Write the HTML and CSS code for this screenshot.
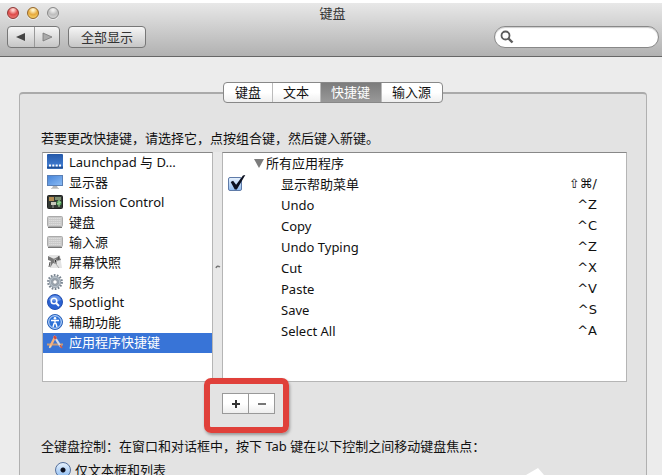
FILE: index.html
```html
<!DOCTYPE html>
<html lang="zh-CN">
<head>
    <meta charset="UTF-8">
    <meta name="viewport" content="width=device-width, initial-scale=1.0">
    <title>键盘</title>
    <link rel="stylesheet" href="styles.css">
</head>
<body>
    <div class="window">
        <header class="titlebar">
            <div class="title-row">
                <div class="lights">
                    <button class="light red" aria-label="关闭"></button>
                    <button class="light yellow" aria-label="最小化"></button>
                    <button class="light gray" aria-label="缩放"></button>
                </div>
                <h1>键盘</h1>
            </div>
            <div class="toolbar">
                <div class="nav">
                    <button aria-label="后退"><svg width="10" height="10" viewBox="0 0 10 10"><path d="M0 5L9 1V9Z" fill="#444"/></svg></button>
                    <button aria-label="前进"><svg width="10" height="10" viewBox="0 0 10 10"><path d="M1 1L10 5L1 9Z" fill="#aaa" stroke="#777" stroke-width=".8"/></svg></button>
                </div>
                <button class="show-all">全部显示</button>
                <label class="search">
                    <svg width="14" height="14" viewBox="0 0 14 14" fill="none" stroke="#5c5c5c"><circle cx="5.5" cy="5.5" r="4" stroke-width="1.8"/><path d="M8.5 8.5L12.5 12.5" stroke-width="2.4"/></svg>
                    <input type="text" aria-label="搜索">
                </label>
            </div>
        </header>

        <main class="content">
            <nav class="tabs">
                <button>键盘</button>
                <button>文本</button>
                <button class="active">快捷键</button>
                <button>输入源</button>
            </nav>

            <section class="pane">
                <p class="hint">若要更改快捷键，请选择它，点按组合键，然后键入新键。</p>

                <div class="lists">
                    <ul class="categories">
                        <li>
                            <svg viewBox="0 0 16 16"><defs><linearGradient id="blue" x2="0" y2="1"><stop stop-color="#2458a8"/><stop offset="1" stop-color="#4684da"/></linearGradient></defs><rect width="16" height="15" rx="1" fill="url(#blue)"/><path d="M0 13.5H16" stroke="#234f91" stroke-width="2"/><path d="M2 11.5h2M5.300 11.500h2M8.700 11.500h2M12 11.500h2" stroke="#fff" stroke-width="2"/></svg>
                            <span>Launchpad 与 D…</span>
                        </li>
                        <li>
                            <svg viewBox="0 0 16 16"><defs><linearGradient id="screen" x2="1" y2="1"><stop stop-color="#4583d8"/><stop offset="1" stop-color="#8dbdf5"/></linearGradient></defs><rect x=".5" y="1.500" width="15" height="10" fill="url(#screen)" stroke="#5a7fb4"/><path d="M6 12h4l1 2H5z" fill="#b5b5b5"/><path d="M4 14.500h8" stroke="#ccc"/></svg>
                            <span>显示器</span>
                        </li>
                        <li>
                            <svg viewBox="0 0 16 16"><rect x=".5" y="1.500" width="15" height="13" rx="1" fill="#343a35" stroke="#222"/><path d="M2 3h5v4H2z" fill="#b18b52"/><path d="M8 3h6v3H8z" fill="#7d8f72"/><path d="M4 8h5v3H4z" fill="#c9c9bd"/><path d="M6 11v3" stroke="#999"/><circle cx="12" cy="9" r="2.500" fill="#4fa057"/><path d="M12 6v7M10 10l4-2" stroke="#a7d6a3"/></svg>
                            <span>Mission Control</span>
                        </li>
                        <li>
                            <svg viewBox="0 0 16 16"><rect x=".5" y="2.500" width="15" height="10" rx="1" fill="#c9c9c9" stroke="#aaa"/><path d="M2 4.500h12M2 6.500h12M2 8.500h12M2 10.500h12" stroke="#dcdcdc" stroke-dasharray="1.500 .5"/><path d="M1 13.500h14" stroke="#777"/></svg>
                            <span>键盘</span>
                        </li>
                        <li>
                            <svg viewBox="0 0 16 16"><rect x=".5" y="2.500" width="15" height="10" rx="1" fill="#c9c9c9" stroke="#aaa"/><path d="M2 4.500h12M2 6.500h12M2 8.500h12M2 10.500h12" stroke="#dcdcdc" stroke-dasharray="1.500 .5"/><path d="M1 13.500h14" stroke="#777"/></svg>
                            <span>输入源</span>
                        </li>
                        <li>
                            <svg viewBox="0 0 16 16"><path d="M2 1h11l2 13H4z" fill="#e4e4e4"/><path d="M1 2l6 3 5-3 2 4-5 1 1 3-4-1-3 5 1-7-3-1z" fill="#777"/><path d="M7 4l3 3-2 3zM9 10l3 4" fill="#333" stroke="#aaa"/><path d="M3 8l-1 5M12 2l-1 4" stroke="#555"/></svg>
                            <span>屏幕快照</span>
                        </li>
                        <li>
                            <svg viewBox="0 0 16 16"><circle cx="8" cy="8" r="6.800" fill="none" stroke="#78838f" stroke-width="2.200" stroke-dasharray="1.700 1.360"/><circle cx="8" cy="8" r="4.300" fill="none" stroke="#96a1ac" stroke-width="3.600"/><circle cx="8" cy="8" r="4.700" fill="none" stroke="#bcc5cd"/><circle cx="8" cy="8" r="2.300" fill="#fff" stroke="#6b7580" stroke-width=".8"/></svg>
                            <span>服务</span>
                        </li>
                        <li>
                            <svg viewBox="0 0 16 16"><circle cx="8" cy="8" r="7.500" fill="#2b62d2" stroke="#2450b0"/><path d="M2 6a6.300 6.300 0 0 1 12 0Q8 9 2 6z" fill="#6694e8"/><circle cx="7" cy="7" r="2.800" fill="none" stroke="#fff" stroke-width="1.500"/><path d="M9 9l3 3" stroke="#fff" stroke-width="2"/></svg>
                            <span>Spotlight</span>
                        </li>
                        <li>
                            <svg viewBox="0 0 16 16"><circle cx="8" cy="8" r="7.500" fill="#2d72d8" stroke="#2f65b8"/><circle cx="8" cy="8" r="6.300" fill="none" stroke="#d3e5ff"/><circle cx="8" cy="4.300" r="1.300" fill="#fff"/><path d="M4 6.500h8M8 6v4M7.200 9L6 13M8.800 9L10 13" stroke="#fff" stroke-width="1.400"/></svg>
                            <span>辅助功能</span>
                        </li>
                        <li class="selected">
                            <svg viewBox="0 0 16 16" fill="none"><path d="M0 10.500h16" stroke="#c79a78" stroke-width="2"/><path d="M8.500 2L3 13" stroke="#f3b07c" stroke-width="2.400"/><path d="M7 2l7 11" stroke="#d5dae4" stroke-width="2.200"/><path d="M7 2l2 3" stroke="#d3493f" stroke-width="2.400"/><path d="M3.800 11.500L2.500 14" stroke="#f1d9b0" stroke-width="1.500"/><path d="M13 11l2 3" stroke="#d35b45" stroke-width="1.500"/></svg>
                            <span>应用程序快捷键</span>
                        </li>
                    </ul>

                    <div class="splitter"><svg width="6" height="6" viewBox="0 0 6 6"><path d="M1 4Q2 1 5 3" fill="none" stroke="#777" stroke-width="1.500"/></svg></div>

                    <div class="shortcuts">
                        <table>
                            <thead>
                                <tr><th colspan="3"><svg width="10" height="9" viewBox="0 0 10 9"><path d="M0 0H10L5 9Z" fill="#7c7c7c"/></svg>所有应用程序</th></tr>
                            </thead>
                            <tbody>
                                <tr><td class="check"><input type="checkbox" id="help-menu" checked></td><td><label for="help-menu">显示帮助菜单</label></td><td class="key">⇧⌘/</td></tr>
                                <tr><td></td><td>Undo</td><td class="key">^Z</td></tr>
                                <tr><td></td><td>Copy</td><td class="key">^C</td></tr>
                                <tr><td></td><td>Undo Typing</td><td class="key">^Z</td></tr>
                                <tr><td></td><td>Cut</td><td class="key">^X</td></tr>
                                <tr><td></td><td>Paste</td><td class="key">^V</td></tr>
                                <tr><td></td><td>Save</td><td class="key">^S</td></tr>
                                <tr><td></td><td>Select All</td><td class="key">^A</td></tr>
                            </tbody>
                        </table>
                    </div>
                </div>

                <div class="edit-buttons">
                    <button aria-label="添加"><svg width="10" height="10" viewBox="0 0 10 10"><path d="M1 5H9M5 1V9" stroke="#333" stroke-width="2"/></svg></button>
                    <button aria-label="移除"><svg width="10" height="10" viewBox="0 0 10 10"><path d="M1 5H9" stroke="#777" stroke-width="2"/></svg></button>
                    <div class="highlight"></div>
                </div>

                <p class="access">全键盘控制：在窗口和对话框中，按下 Tab 键在以下控制之间移动键盘焦点：</p>
                <label class="radio"><input type="radio" name="access" checked>仅文本框和列表</label>
            </section>
        </main>
        <svg class="corner-mark" width="20" height="8" viewBox="0 0 20 8"><path d="M2 8L14 1L20 8Z" fill="#fff"/></svg>
    </div>
</body>
</html>
```
FILE: styles.css
```css
* {
    box-sizing: border-box;
}
body {
    margin: 0;
    font-family: "Noto Sans", "Noto Sans CJK SC", "DejaVu Sans", sans-serif;
    font-size: 13px;
    line-height: 20px;
    color: #111;
    background: #fff;
}
button, input {
    font: inherit;
    color: inherit;
    margin: 0;
    padding: 0;
}
p, h1, ul {
    margin: 0;
    padding: 0;
}
svg {
    display: block;
    flex: none;
}
.window {
    position: relative;
    display: flex;
    flex-direction: column;
    height: 100vh;
    padding-top: 3px;
    overflow: hidden;
}

/* title bar */
.titlebar {
    flex: none;
    padding-bottom: 8px;
    background: linear-gradient(#e8e8e8, #b1b1b1);
    border-bottom: 1px solid #666;
}
.title-row {
    display: grid;
    grid-template-columns: 1fr auto 1fr;
    align-items: center;
    height: 22px;
    padding: 0 4px 2px 7px;
}
.title-row h1 {
    font-size: 13px;
    font-weight: normal;
    color: #333;
}
.lights {
    display: flex;
    gap: 8px;
}
.light {
    width: 12px;
    height: 12px;
    border: 1px solid #888;
    border-radius: 50%;
    box-shadow: 0 1px 0 #eee;
}
.red {
    border-color: #8d3735;
    background: radial-gradient(circle at 50% 20%, #ffd0cc 10%, #de4a49 50%, #f58f88);
}
.yellow {
    border-color: #94662a;
    background: radial-gradient(circle at 50% 20%, #fff3c8 10%, #e6a93c 50%, #ffe47d);
}
.gray {
    background: radial-gradient(circle at 50% 20%, #eee 10%, #bdbdbd 50%, #e2e2e2);
}
.toolbar {
    display: flex;
    gap: 8px;
    padding: 1px 3px 0 7px;
}
.nav {
    display: flex;
    border: 1px solid #777;
    border-radius: 4px;
    background: linear-gradient(#f6f6f6, #c6c6c6);
}
.nav button {
    display: flex;
    align-items: center;
    justify-content: center;
    width: 26px;
    height: 20px;
    border: 0;
    background: none;
}
.nav button + button {
    width: 25px;
    border-left: 1px solid #999;
}
.show-all {
    width: 78px;
    height: 22px;
    line-height: 20px;
    border: 1px solid #777;
    border-radius: 4px;
    background: linear-gradient(#f6f6f6, #c6c6c6);
    color: #333;
}
.search {
    display: flex;
    align-items: center;
    width: 165px;
    height: 22px;
    margin-left: auto;
    padding: 0 8px 0 5px;
    border: 1px solid #888;
    border-radius: 11px;
    background: #fff;
    box-shadow: inset 0 1px 1px #ccc;
}
.search input {
    flex: 1;
    min-width: 0;
    border: 0;
    outline: 0;
    background: none;
}

/* content */
.content {
    display: flex;
    flex: 1;
    flex-direction: column;
    padding: 25px 15px 0 19px;
    background: #ececec;
}
.tabs {
    z-index: 1;
    display: flex;
    align-self: center;
    margin-bottom: -11px;
    border: 1px solid #888;
    border-radius: 4px;
    background: linear-gradient(#fff 50%, #efefef);
}
.tabs button {
    height: 19px;
    padding: 0 11px;
    line-height: 19px;
    border: 0;
    background: none;
}
.tabs button + button {
    padding-left: 10px;
    border-left: 1px solid #bbb;
}
.tabs .active {
    background: linear-gradient(#7c7c7c, #999);
    color: #fff;
}
.pane {
    flex: 1;
    padding: 34px 19px 0 21px;
    border: 1px solid #b0b0b0;
    border-top: 2px solid #aaa;
    border-bottom: 0;
    border-radius: 4px 4px 0 0;
    background: #e3e3e3;
}
.hint {
    margin-bottom: 4px;
}
.lists {
    display: flex;
    height: 230px;
    margin-left: 1px;
}
.categories {
    width: 171px;
    list-style: none;
    border: 1px solid #b5b5b5;
    border-top-color: #888;
    background: #fff;
}
.categories li {
    display: flex;
    align-items: center;
    gap: 6px;
    height: 20px;
    padding: 0 0 2px 4px;
    white-space: nowrap;
}
.categories svg {
    width: 16px;
    height: 16px;
}
.categories .selected {
    background: #3874d7;
    color: #fff;
}
.splitter {
    display: flex;
    align-items: center;
    justify-content: center;
    width: 9px;
    background: #e8e8e8;
}
.shortcuts {
    flex: 1;
    border: 1px solid #b5b5b5;
    border-top-color: #888;
    background: #fff;
}
table {
    width: 100%;
    border-collapse: collapse;
}
tr {
    height: 21px;
}
th, td {
    padding: 0 0 1px;
    line-height: 18px;
    font-weight: normal;
    text-align: left;
}
th {
    padding-left: 31px;
}
th svg {
    display: inline-block;
    margin-right: 2px;
}
.check, td:first-child {
    width: 58px;
    padding-left: 5px;
}
.check input {
    display: block;
    appearance: none;
    width: 14px;
    height: 14px;
    border: 1px solid #5f7ba8;
    border-radius: 2px;
    background: linear-gradient(#e5f0fc, #93bdf0);
}
.check input::before {
    content: "";
    display: block;
    width: 17px;
    height: 15px;
    margin-top: -3px;
    background: #0b1020;
    clip-path: polygon(10% 47%, 24% 38%, 42% 65%, 82% 4%, 96% 0, 46% 96%, 34% 96%);
}
.key {
    padding-right: 29px;
    font-family: "DejaVu Sans", sans-serif;
    text-align: right;
}

/* add / remove */
.edit-buttons {
    position: relative;
    display: flex;
    width: 53px;
    margin: 11px 0 22px 181px;
    border: 1px solid #999;
}
.edit-buttons button {
    display: flex;
    flex: 1;
    align-items: center;
    justify-content: center;
    height: 19px;
    border: 0;
    background: linear-gradient(#fff 50%, #eee);
}
.edit-buttons button + button {
    border-left: 1px solid #999;
}
.highlight {
    position: absolute;
    inset: -16px -15px -20px -19px;
    border: 6px solid #e0403a;
    border-radius: 7px;
    box-shadow: 1px 2px 3px #999;
    pointer-events: none;
}
.radio {
    display: flex;
    align-items: center;
    gap: 4px;
    padding: 4px 0 0 14px;
}
.radio input {
    appearance: none;
    width: 16px;
    height: 16px;
    border: 1px solid #55709c;
    border-radius: 50%;
    background: radial-gradient(circle, #0b1020 2px, transparent 3px), linear-gradient(#e5f0fc, #8fbdf2);
}
.corner-mark {
    position: absolute;
    right: 118px;
    bottom: 0;
}
```
